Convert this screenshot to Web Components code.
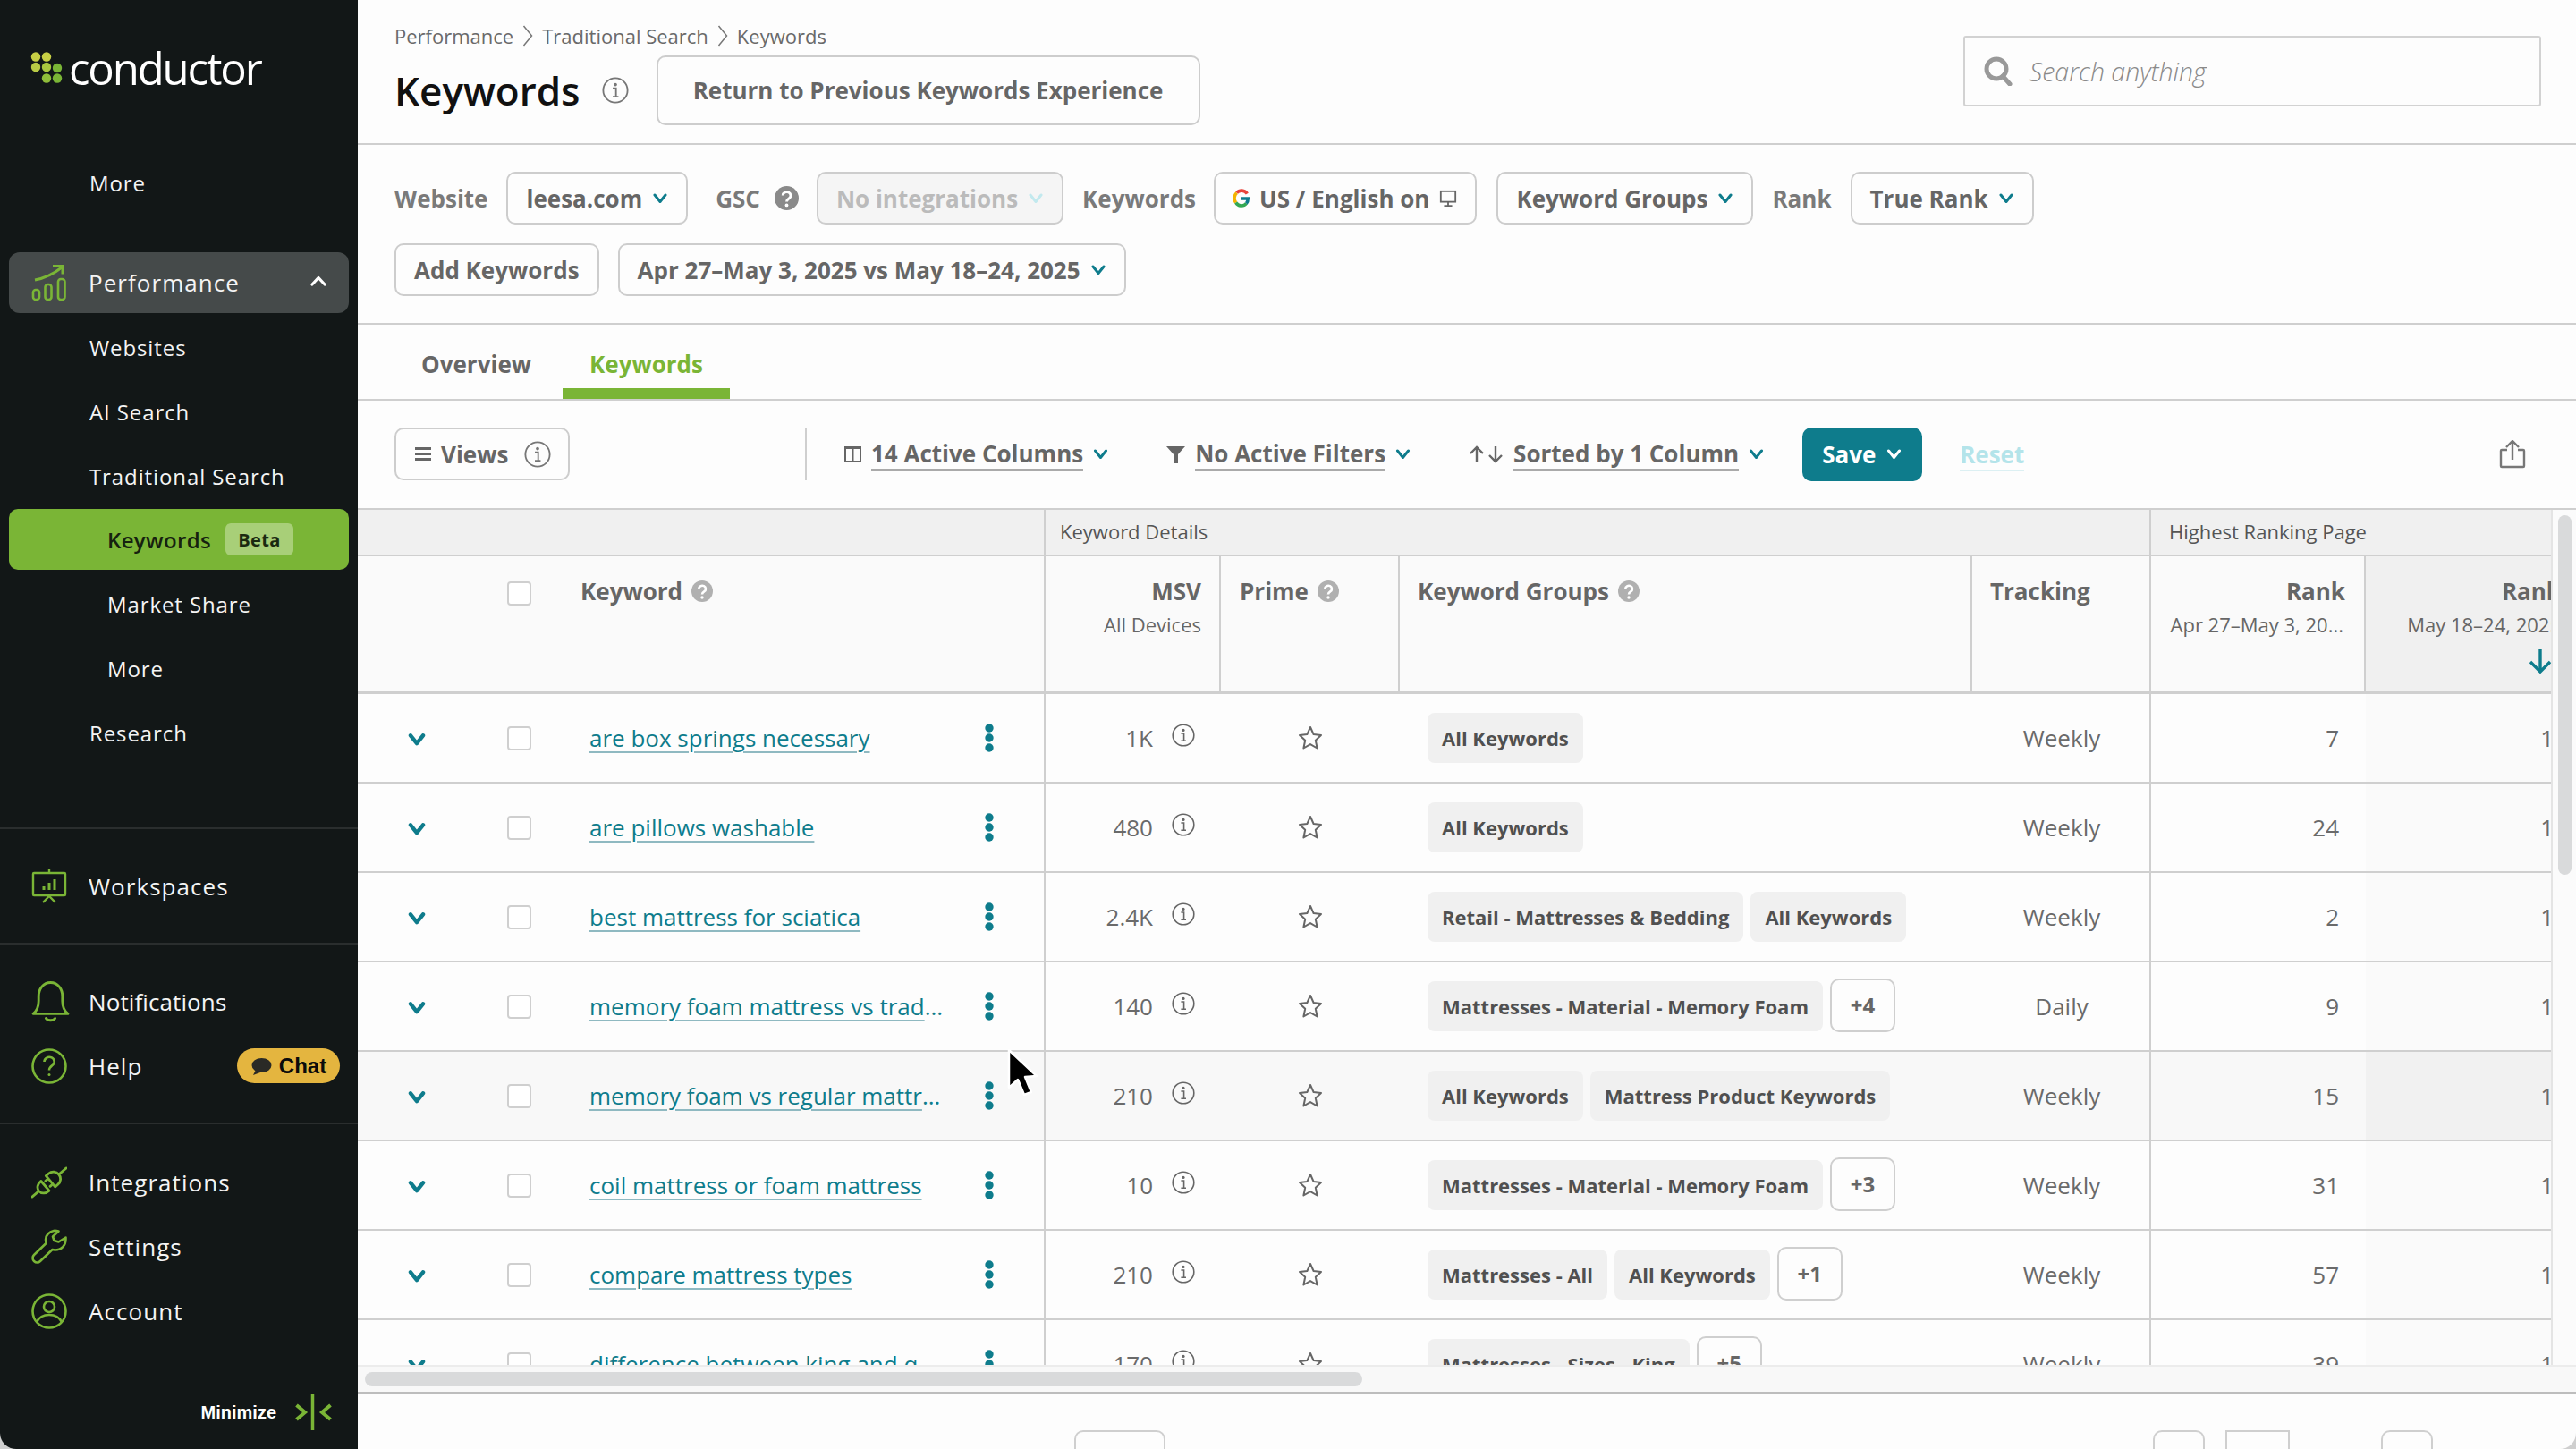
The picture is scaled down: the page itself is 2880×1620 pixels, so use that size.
<!DOCTYPE html>
<html lang="en"><head><meta charset="utf-8"><title>Keywords</title>
<style>
html,body{margin:0;padding:0;background:#cfcfcf;}
body{font-family:"Open Sans",sans-serif;width:2880px;height:1620px;overflow:hidden;}
</style></head><body>
<app-shell>
  <side-nav slot="nav"></side-nav>
  <page-header></page-header>
  <filter-bar></filter-bar>
  <tab-bar></tab-bar>
  <table-toolbar></table-toolbar>
  <kw-table></kw-table>
  <table-pager></table-pager>
</app-shell>
<script>
const T='#0e7c8c',G='#7ab536';
const chev=(c=T,w=17,h=12,s=3)=>`<svg width="${w}" height="${h}" viewBox="0 0 16 12" style="flex:none"><path d="M2 2l6 7.500L14 2" fill="none" stroke="${c}" stroke-width="${s}" stroke-linecap="round" stroke-linejoin="round"/></svg>`;
const info=(s=26,c='#777')=>`<svg width="${s}" height="${s}" viewBox="0 0 26 26" style="flex:none"><circle cx="13" cy="13" r="11.800" fill="none" stroke="${c}" stroke-width="1.600"/><circle cx="13" cy="7.400" r="1.600" fill="${c}"/><path d="M10.400 11h3.200v8M10.400 19.200h5.600" fill="none" stroke="${c}" stroke-width="1.600"/></svg>`;
const qm=(s=24,c='#b0b0b0')=>`<svg width="${s}" height="${s}" viewBox="0 0 24 24" style="flex:none"><circle cx="12" cy="12" r="12" fill="${c}"/><path d="M8.200 9.400a3.900 3.600 0 1 1 6 3c-1.500 1-2.200 1.600-2.200 3.200" fill="none" stroke="#fff" stroke-width="2.600"/><circle cx="12" cy="19" r="1.700" fill="#fff"/></svg>`;
const ICON={
perf:`<svg width="40" height="42" viewBox="0 0 40 42" fill="none" stroke="${G}" stroke-width="2.600"><rect x="2" y="29" width="7" height="11" rx="3"/><rect x="15.500" y="23" width="7" height="17" rx="3"/><rect x="30" y="17" width="7.500" height="23" rx="3"/><path d="M4 18c11-2 20-6 30-14" stroke-width="3"/><path d="M24 2.500h11v9" stroke-width="3"/></svg>`,
work:`<svg width="40" height="40" viewBox="0 0 40 40" fill="none" stroke="${G}" stroke-width="2.400"><rect x="2" y="5" width="36" height="25" rx="1"/><path d="M20 1v4M13 38l7-7 7 7"/><path d="M14 24v-4M20 24v-8M26 24V12" stroke-width="3"/></svg>`,
bell:`<svg width="43" height="48" viewBox="0 0 42 46" fill="none" stroke="${G}" stroke-width="2.800" stroke-linejoin="round"><path d="M2 36c4-3 6-7 6-14V17C8 9 13 2 21 2s13 7 13 15v5c0 7 2 11 6 14z"/><path d="M16 41c2 3 8 3 10 0" stroke-linecap="round"/></svg>`,
help:`<svg width="40" height="40" viewBox="0 0 40 40" fill="none" stroke="${G}" stroke-width="2.600"><circle cx="20" cy="20" r="18.500"/><path d="M14.500 15a5.600 5.200 0 1 1 8.600 4.400C21 21 20 22 20 24.500"/><circle cx="20" cy="29.500" r="1.500" fill="${G}" stroke="none"/></svg>`,
plug:`<svg width="40" height="42" viewBox="0 0 40 42" fill="none" stroke="${G}" stroke-width="2.800" stroke-linecap="round" stroke-linejoin="round"><g transform="translate(20,21) rotate(-40)"><path d="M-25 0H-15M-6 -7A8 7 0 0 0 -15 0A8 7 0 0 0 -6 7Z"/><path d="M2 -8H6A8 8 0 0 1 6 8H2ZM2 -4H-2M2 4H-2M14 0H25"/></g></svg>`,
wrench:`<svg width="40" height="40" viewBox="0 0 40 40" fill="none" stroke="${G}" stroke-width="2.600" stroke-linejoin="round"><path d="M25 2c-5 1-9 5-9 10l.5 4L3 29c-2 2-2 5 0 7s5 2 7 0L23.500 23l3 .5c7 0 12-5 12-12v-2l-8 5-5-1.500-1.500-4.500 6.500-6c-2-.5-3.500-.8-5.500-.5z"/></svg>`,
user:`<svg width="40" height="40" viewBox="0 0 40 40" fill="none" stroke="${G}" stroke-width="2.600"><circle cx="20" cy="20" r="18.500"/><circle cx="20" cy="15" r="6"/><path d="M6 32c3-6 9-8 14-8s11 2 14 8"/></svg>`
};

function def(name,css,html,init){
  customElements.define(name,class extends HTMLElement{
    constructor(){super();const r=this.attachShadow({mode:'open'});
      r.innerHTML=`<style>:host{box-sizing:border-box}*{box-sizing:border-box}${css}</style>`+(typeof html==='function'?html(this):html);}
  });
}

def('app-shell',`:host{display:block;width:2880px;height:1620px;position:relative}
.w{display:grid;grid-template-columns:400px 2480px;height:1620px;overflow:hidden;border-radius:0 0 18px 18px;background:#fdfdfd}
.m{display:flex;flex-direction:column;min-width:0;height:1620px;overflow:hidden}
.cur{position:absolute;left:1125px;top:1172px;z-index:5}`,
`<div class="w"><slot name="nav"></slot><div class="m"><slot></slot></div></div>
<svg class="cur" width="36" height="56" viewBox="0 0 36 56"><path d="M3 2l0 42 10-9 7 17 8-3-7-17 13-1z" fill="#000" stroke="#fff" stroke-width="2.500" stroke-linejoin="round"/></svg>`);

def('nav-item',`:host{display:block}
.i{display:flex;align-items:center;height:72px;color:#f4f4f4;font-size:26px;letter-spacing:var(--ls,1.050px);position:relative}
.ic{width:46px;margin-left:35px;margin-right:18px;display:flex;align-items:center;flex:none}
:host([sub]) .i,:host([sub2]) .i{font-size:24px;letter-spacing:.9px;padding-bottom:2px}
:host([sub]) .i{padding-left:100px}
:host([sub2]) .i{padding-left:120px}
:host([active]) .i{height:68px;margin:0 10px;background:${G};border-radius:10px;padding-left:110px;font-size:24px;letter-spacing:.35px;font-weight:600;color:#16210f}
:host([open]) .i{height:68px;margin:0 10px;background:#454a4a;border-radius:12px}
:host([open]) .ic{margin-left:25px}
.b{display:flex;align-items:center;justify-content:center;width:76px;height:36px;background:#a8cf78;color:#1b2a10;font-size:20px;font-weight:700;border-radius:6px;margin-left:16px}
.c{position:absolute;right:25px;top:26px;display:flex}
.chat{position:absolute;left:265px;top:16px;width:115px;height:39px;border-radius:20px;background:#e4b53f;display:flex;align-items:center;justify-content:center;gap:8px;font:700 24px "Liberation Sans",sans-serif;color:#0b0b0b;letter-spacing:0}`,
h=>{const ic=h.getAttribute('icon');const act=h.hasAttribute('active');
return `<div class="i">${ic?`<span class="ic">${ICON[ic]}</span>`:''}<slot></slot>${act?'<span class="b">Beta</span>':''}${h.hasAttribute('open')?`<span class="c"><svg width="18" height="12" viewBox="0 0 18 12"><path d="M2 10l7-7.500 7 7.500" fill="none" stroke="#fff" stroke-width="3.200" stroke-linecap="round" stroke-linejoin="round"/></svg></span>`:''}${h.hasAttribute('chat')?`<span class="chat"><svg width="24" height="20" viewBox="0 0 24 20"><ellipse cx="12.500" cy="9" rx="11" ry="8" fill="#2a2a26"/><path d="M6 14l-3 6 8-3z" fill="#2a2a26"/></svg>Chat</span>`:''}</div>`});

def('side-nav',`:host{display:flex;flex-direction:column;width:400px;height:1620px;background:#121717;color:#f4f4f4;font-family:"Open Sans",sans-serif}
.logo{height:169px;position:relative;padding:44px 0 0 77px;font-size:49px;font-weight:500;color:#fff;letter-spacing:-2.100px;line-height:64px}
.logo svg{position:absolute;left:33px;top:56px}
.sec{border-top:2px solid #2a2e2e}
.mt{margin-top:41px}.m3{margin-top:3px}
.s2{padding:28px 0 27px}.s3{padding:28px 0 27px}.s4{padding:29px 0 0}
.min{margin-top:auto;height:62px;display:flex;align-items:center;justify-content:flex-end;padding:0 29px 20px 0;font:700 20px "Liberation Sans",sans-serif;color:#fff;gap:21px}`,
`<div class="logo"><svg width="38" height="40" viewBox="0 0 38 40"><circle cx="7" cy="7.500" r="5.200" fill="#c7cf45"/><circle cx="19" cy="7.500" r="5.200" fill="#c7cf45"/><circle cx="7" cy="19" r="5.200" fill="#b9cb45"/><circle cx="19" cy="19" r="5.200" fill="#a9c63f"/><circle cx="31" cy="20" r="5.200" fill="${G}"/><circle cx="19" cy="31.500" r="5.200" fill="#8fbd3a"/><circle cx="31" cy="31.500" r="5.200" fill="${G}"/></svg>conductor</div>
<nav-item sub>More</nav-item>
<div class="mt"><nav-item open icon="perf">Performance</nav-item></div>
<div class="m3"><nav-item sub>Websites</nav-item><nav-item sub>AI Search</nav-item><nav-item sub>Traditional Search</nav-item></div>
<nav-item active>Keywords</nav-item>
<div class="m3"><nav-item sub2>Market Share</nav-item><nav-item sub2>More</nav-item><nav-item sub>Research</nav-item></div>
<div style="height:69px"></div>
<div class="sec s2"><nav-item icon="work">Workspaces</nav-item></div>
<div class="sec s3"><nav-item icon="bell" style="--ls:.1px">Notifications</nav-item><nav-item icon="help" chat>Help</nav-item></div>
<div class="sec s4"><nav-item icon="plug">Integrations</nav-item><nav-item icon="wrench">Settings</nav-item><nav-item icon="user">Account</nav-item></div>
<div class="min"><span>Minimize</span><svg width="41" height="40" viewBox="0 0 41 40" fill="none" stroke="${G}" stroke-width="4"><path d="M1.500 12l9.500 8-9.500 8"/><path d="M19.500 0v40" stroke-width="3.500"/><path d="M39.500 12l-9.500 8 9.500 8"/></svg></div>`);

def('drop-btn',`:host{display:inline-flex;flex:none}
.b{display:flex;align-items:center;height:59px;border:2px solid #cdcdcd;border-radius:10px;padding:0 20px;font-size:26px;font-weight:700;color:#666;gap:11px;white-space:nowrap;background:#fdfdfd}
:host([off]) .b{background:#f5f5f5;color:#bbb}`,
h=>`<div class="b"><slot></slot>${h.hasAttribute('nochev')?'':chev(h.hasAttribute('off')?'#c2e9ee':T,18)}</div>`);

def('page-header',`:host{display:flex;flex:none;height:162px;border-bottom:2px solid #cfcfcf;padding-left:41px;justify-content:space-between}
.bc{display:flex;align-items:center;height:28px;margin-top:26px;font-size:22px;color:#6a6a6a;gap:10px}
.t{display:flex;align-items:center;margin-top:8px;height:78px}
h1{margin:0;font-size:44px;font-weight:600;color:#111;line-height:78px}
.inf{margin:0 31px 0 24px;display:flex}
.ret{display:flex;align-items:center;justify-content:center;width:608px;height:78px;border:2px solid #cdcdcd;border-radius:10px;font-size:26px;font-weight:700;color:#666}
.s{width:646px;height:79px;margin:40px 39px 0 0;border:2px solid #d2d2d2;border-radius:3px;display:flex;align-items:center;padding-left:21px;gap:19px;font-size:28.500px;font-style:italic;font-weight:300;color:#8a8a8a}`,
`<div><div class="bc"><span>Performance</span><svg width="12" height="26" viewBox="0 0 12 26"><path d="M1.500 2l9 11-9 11" fill="none" stroke="#777" stroke-width="1.500"/></svg><span>Traditional Search</span><svg width="12" height="26" viewBox="0 0 12 26"><path d="M1.500 2l9 11-9 11" fill="none" stroke="#777" stroke-width="1.500"/></svg><span>Keywords</span></div>
<div class="t"><h1>Keywords</h1><span class="inf">${info(30,'#777')}</span><div class="ret">Return to Previous Keywords Experience</div></div></div>
<div class="s"><svg width="32" height="33" viewBox="0 0 32 33" fill="none" stroke="#999" stroke-width="5"><circle cx="14" cy="14" r="11"/><path d="M21 22l8 9" stroke-linecap="round"/></svg><span>Search anything</span></div>`);

def('filter-bar',`:host{display:block;flex:none;height:201px;border-bottom:2px solid #cfcfcf;padding:30px 0 0 41px}
.r{display:flex;align-items:center;height:59px}
.r+.r{margin-top:21px}
.l{font-size:26px;font-weight:700;color:#7a7a7a;white-space:nowrap}`,
`<div class="r"><span class="l" style="margin-right:21px">Website</span><drop-btn>leesa.com</drop-btn>
<span class="l" style="margin:0 16px 0 31px">GSC</span><span style="display:flex;margin-right:20px">${qm(27,'#8a8a8a')}</span><drop-btn off>No integrations</drop-btn>
<span class="l" style="margin:0 20px 0 21px">Keywords</span>
<drop-btn nochev><svg width="18" height="22" viewBox="0 0 20 22" fill="none" stroke-width="4"><path d="M17 5a8 8 0 0 0-13-1" stroke="#e8453c"/><path d="M4 4a9 9 0 0 0-1 12" stroke="#f4b400"/><path d="M3 16a8 8 0 0 0 13 1" stroke="#34a853"/><path d="M16 17c2-2 2-4 2-6h-8" stroke="#0e7c8c"/></svg>US / English on <svg width="20" height="24" viewBox="0 0 22 24" fill="none" stroke="#666" stroke-width="2"><rect x="2" y="3" width="18" height="13"/><path d="M11 16v5M6 21h10"/></svg></drop-btn>
<span style="width:22px"></span><drop-btn>Keyword Groups</drop-btn><span class="l" style="margin:0 21px">Rank</span><drop-btn>True Rank</drop-btn></div>
<div class="r"><drop-btn nochev>Add Keywords</drop-btn><span style="width:21px"></span><drop-btn>Apr 27–May 3, 2025 vs May 18–24, 2025</drop-btn></div>`);

def('tab-bar',`:host{display:flex;flex:none;height:85px;border-bottom:2px solid #cfcfcf;padding-left:30px;font-size:26px;font-weight:700;color:#666}
.t{height:83px;padding:23px 41px 0;line-height:42px}
.t+.t{padding:23px 30px 0;color:${G};border-bottom:12px solid ${G};margin-left:-6px}`,
`<div class="t">Overview</div><div class="t">Keywords</div>`);

def('table-toolbar',`:host{display:flex;flex:none;height:120px;align-items:flex-start;padding:30px 0 0 41px;font-size:26px;font-weight:700;color:#666;position:relative}
.v{display:flex;align-items:center;width:196px;height:59px;border:2px solid #cdcdcd;border-radius:10px;padding-left:21px}
.sep{width:2px;height:59px;background:#cfcfcf;margin:0 42px 0 263px}
.d{display:flex;align-items:center;height:59px;white-space:nowrap}
.d u{text-decoration:none;border-bottom:3px solid #aaa;line-height:34px;display:block;margin:2px 11px 0}
.save{display:flex;align-items:center;gap:12px;height:60px;width:134px;background:${T};border-radius:10px;color:#fff;padding-left:22px}
.r{color:#b4e4ea;border-bottom:2px solid #dcf0f3;line-height:34px;margin:13px 0 0 42px;height:36px}
.x{position:absolute;left:2394px;top:44px}`,
`<div class="v"><svg width="18" height="16" viewBox="0 0 18 16" fill="#666" style="margin-right:11px"><rect width="18" height="3"/><rect y="6" width="18" height="3"/><rect y="12" width="18" height="3"/></svg>Views<span style="display:flex;margin-left:18px">${info(30,'#777')}</span></div>
<div class="sep"></div>
<div class="d"><svg width="19" height="20" viewBox="0 0 19 20" fill="none" stroke="#666" stroke-width="2"><rect x="1" y="2" width="17" height="16"/><path d="M9.500 2v16M1 3h17"/></svg><u>14 Active Columns</u>${chev()}</div>
<div class="d" style="margin-left:65px"><svg width="21" height="20" viewBox="0 0 21 20" fill="#666"><path d="M0 1h21l-8 9v10H8V10z"/></svg><u>No Active Filters</u>${chev()}</div>
<div class="d" style="margin-left:65px"><svg width="39" height="20" viewBox="0 0 39 20" fill="none" stroke="#666" stroke-width="2.400"><path d="M9 19V2M2 9l7-7 7 7M30 1v17M23 11l7 7 7-7"/></svg><u>Sorted by 1 Column</u>${chev()}</div>
<div class="save" style="margin-left:43px">Save ${chev('#fff')}</div>
<div class="r">Reset</div>
<svg class="x" width="30" height="32" viewBox="0 0 30 32" fill="none" stroke="#777" stroke-width="2.400"><path d="M9 11H3a1 1 0 0 0-1 1v17a1 1 0 0 0 1 1h24a1 1 0 0 0 1-1V12a1 1 0 0 0-1-1h-6M15 22V2M8 8l7-7 7 7"/></svg>`);

def('group-chip',`:host{display:inline-flex;flex:none}
.c{display:flex;align-items:center;height:56px;padding:0 16px;background:#f0f0f0;border-radius:8px;font-size:22px;font-weight:700;color:#505050;white-space:nowrap}
:host([more]) .c{background:#fdfdfd;border:2px solid #cfcfcf;height:60px;padding:0;width:73px;justify-content:center;font-size:24px;color:#666;border-radius:10px;margin-top:-3px}`,`<div class="c"><slot></slot></div>`);

const COLS='769px 196px 200px 640px 200px 240px 240px';
def('kw-row',`:host{display:grid;grid-template-columns:${COLS};height:100px;border-bottom:2px solid #cfcfcf;font-size:26px;font-weight:400;color:#6a6a6a;width:2485px;background:#fdfdfd}
:host([hover]){background:#f8f8f8}
.c{display:flex;align-items:center;height:98px;white-space:nowrap}
.k{border-right:2px solid #cfcfcf}
.ch{width:132px;display:flex;justify-content:center;flex:none;margin-top:3px}
.cb{width:27px;height:27px;border:2px solid #cfcfcf;border-radius:4px;margin-left:35px;flex:none;background:#fff}
.lk{width:441px;margin-left:65px;flex:none;color:${T}}
.lk a{text-decoration:underline;text-decoration-color:#8fb9c1;text-decoration-thickness:2px;text-underline-offset:5px}
.msv{justify-content:flex-end;padding-right:29px}
.msv span{margin-right:21px}
.msv svg{margin-top:-6px}
.pr{padding-left:86px}
.gr{gap:8px;padding-left:31px}
.tr{justify-content:center}
.rk{justify-content:flex-end;padding-right:30px;border-left:2px solid #cfcfcf;margin-left:-2px}
.so{justify-content:flex-end;padding-right:30px;background:#fafafa}
:host([hover]) .so{background:#f1f1f1}`,
h=>{const [kw,msv,rank,dots]=[h.getAttribute('kw'),h.getAttribute('msv'),h.getAttribute('rank'),h.hasAttribute('dots')];
return `<div class="c k"><span class="ch">${chev(T,22,14,3.800)}</span><span class="cb"></span><span class="lk"><a>${kw}</a>${dots?'...':''}</span><svg width="12" height="32" viewBox="0 0 12 32" fill="${T}"><circle cx="6" cy="5" r="4.700"/><circle cx="6" cy="16" r="4.700"/><circle cx="6" cy="27" r="4.700"/></svg></div>
<div class="c msv"><span>${msv}</span>${info(26,'#666')}</div>
<div class="c pr"><svg width="28" height="28" viewBox="0 0 28 28"><path d="M14 2l3.600 8 8.400 1-6.200 5.800 1.800 8.700-7.600-4.400-7.600 4.400 1.800-8.700L2 11l8.400-1z" fill="none" stroke="#666" stroke-width="2" stroke-linejoin="round"/></svg></div>
<div class="c gr"><slot></slot></div>
<div class="c tr">${h.getAttribute('track')}</div>
<div class="c rk">${rank}</div>
<div class="c so">1</div>`});

def('kw-table',`:host{display:grid;grid-template-columns:2452px 28px;flex:none;height:958px;border-top:2px solid #cfcfcf;position:relative}
.t{overflow:hidden;height:956px;min-width:0}
.in{width:2485px}
.g{display:grid;grid-template-columns:769px 1236px 280px;height:52px;background:#f0f0f0;border-bottom:2px solid #cfcfcf;font-size:22px;color:#555}
.g div{padding:9px 0 0 16px;line-height:30px;border-right:2px solid #cfcfcf}
.g div:last-child{padding-left:20px;border:0}
.h{display:grid;grid-template-columns:${COLS};height:154px;border-bottom:4px solid #cfcfcf;background:#fafafa;font-size:26px;font-weight:700;color:#666}
.h>div{padding-top:20px;border-right:2px solid #cfcfcf;position:relative;line-height:38px;white-space:nowrap}
.h small{display:block;font-size:22px;font-weight:400;line-height:36px;color:#666}
.row{display:flex;align-items:center;gap:10px}
.ra{text-align:right;padding-right:22px}
.sb{background:#fbfbfb;border-left:2px solid #e4e4e4;position:relative}
.sb i{position:absolute;left:6px;top:6px;width:15px;height:402px;background:#d9dadb;border-radius:8px}`,
`<div class="t"><div class="in">
<div class="g"><div></div><div>Keyword Details</div><div>Highest Ranking Page</div></div>
<div class="h">
<div style="display:flex;align-items:flex-start"><span style="width:27px;height:27px;border:2px solid #cfcfcf;border-radius:4px;margin:8px 55px 0 167px;background:#fff;flex:none"></span><span class="row">Keyword ${qm()}</span></div>
<div class="ra" style="padding-right:20px">MSV<small>All Devices</small></div>
<div style="padding-left:21px"><span class="row">Prime ${qm()}</span></div>
<div style="padding-left:20px"><span class="row">Keyword Groups ${qm()}</span></div>
<div style="padding-left:20px">Tracking</div>
<div class="ra" style="padding-right:21px">Rank<small style="margin-right:2px">Apr 27–May 3, 20...</small></div>
<div class="ra" style="background:#f0f0f0;border:0">Rank<small>May 18–24, 2025</small><svg style="position:absolute;left:181px;top:103px" width="28" height="28" viewBox="0 0 28 28" fill="none" stroke="${T}" stroke-width="3.400"><path d="M14 1v25M3 15l11 11 11-11"/></svg></div>
</div>
<kw-row kw="are box springs necessary" msv="1K" track="Weekly" rank="7"><group-chip>All Keywords</group-chip></kw-row>
<kw-row kw="are pillows washable" msv="480" track="Weekly" rank="24"><group-chip>All Keywords</group-chip></kw-row>
<kw-row kw="best mattress for sciatica" msv="2.4K" track="Weekly" rank="2"><group-chip>Retail - Mattresses &amp; Bedding</group-chip><group-chip>All Keywords</group-chip></kw-row>
<kw-row dots kw="memory foam mattress vs trad" msv="140" track="Daily" rank="9"><group-chip>Mattresses - Material - Memory Foam</group-chip><group-chip more>+4</group-chip></kw-row>
<kw-row hover dots kw="memory foam vs regular mattr" msv="210" track="Weekly" rank="15"><group-chip>All Keywords</group-chip><group-chip>Mattress Product Keywords</group-chip></kw-row>
<kw-row kw="coil mattress or foam mattress" msv="10" track="Weekly" rank="31"><group-chip>Mattresses - Material - Memory Foam</group-chip><group-chip more>+3</group-chip></kw-row>
<kw-row kw="compare mattress types" msv="210" track="Weekly" rank="57"><group-chip>Mattresses - All</group-chip><group-chip>All Keywords</group-chip><group-chip more>+1</group-chip></kw-row>
<kw-row dots kw="difference between king and q" msv="170" track="Weekly" rank="39"><group-chip>Mattresses - Sizes - King</group-chip><group-chip more>+5</group-chip></kw-row>
</div></div>
<div class="sb"><i></i></div>`);

def('table-pager',`:host{display:block;flex:none;height:94px}
.sc{height:32px;background:#f8f8f8;border-bottom:2px solid #bdbdbd;padding:6px 0 0 8px;border-top:2px solid #ececec}
.sc i{display:block;width:1115px;height:16px;background:#d9dadb;border-radius:8px}
.f{display:flex;padding-top:41px}
.b{height:60px;border:2px solid #cfcfcf;border-radius:10px;flex:none;width:58px;background:#fdfdfd}`,
`<div class="sc"><i></i></div><div class="f"><span class="b" style="width:102px;margin-left:801px"></span><span class="b" style="margin-left:1104px"></span><span class="b" style="width:72px;border-radius:0;margin:0 102px 0 23px"></span><span class="b"></span></div>`);
</script>
</body></html>
